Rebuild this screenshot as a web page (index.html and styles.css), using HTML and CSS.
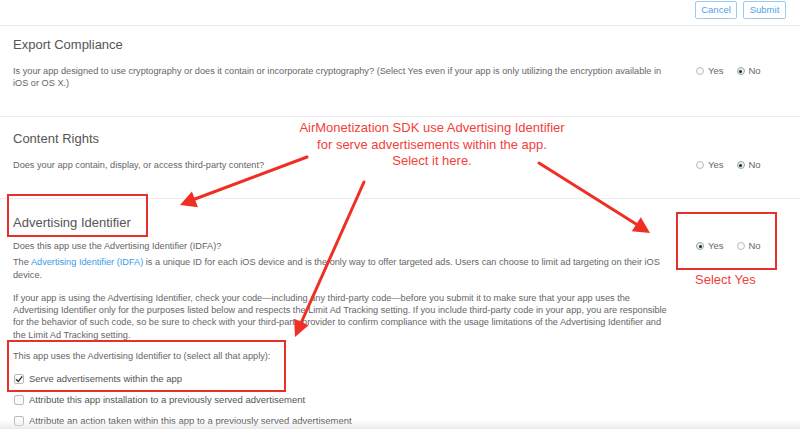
FILE: index.html
```html
<!DOCTYPE html>
<html>
<head>
<meta charset="utf-8">
<link rel="stylesheet" href="styles.css">
</head>
<body>
<div class="page">
  <header class="topbar">
    <button class="btn cancel">Cancel</button>
    <button class="btn submit">Submit</button>
  </header>

  <section class="section first">
    <h2 class="title">Export Compliance</h2>
    <div class="row">
      <p class="text">Is your app designed to use cryptography or does it contain or incorporate cryptography? (Select Yes even if your app is only utilizing the encryption available in<br>iOS or OS X.)</p>
      <div class="radios">
        <span class="radio"></span><span class="rlabel">Yes</span>
        <span class="radio on"></span><span class="rlabel">No</span>
      </div>
    </div>
  </section>

  <section class="section second">
    <h2 class="title">Content Rights</h2>
    <div class="row">
      <p class="text">Does your app contain, display, or access third-party content?</p>
      <div class="radios">
        <span class="radio"></span><span class="rlabel">Yes</span>
        <span class="radio on"></span><span class="rlabel">No</span>
      </div>
    </div>
  </section>

  <section class="section third">
    <h2 class="title">Advertising Identifier</h2>
    <div class="row">
      <p class="text">Does this app use the Advertising Identifier (IDFA)?</p>
      <div class="radios">
        <span class="radio on"></span><span class="rlabel">Yes</span>
        <span class="radio"></span><span class="rlabel">No</span>
      </div>
    </div>
    <p class="text info">The <a class="link">Advertising Identifier (IDFA)</a> is a unique ID for each iOS device and is the only way to offer targeted ads. Users can choose to limit ad targeting on their iOS<br>device.</p>
    <p class="text para">If your app is using the Advertising Identifier, check your code—including any third-party code—before you submit it to make sure that your app uses the<br>Advertising Identifier only for the purposes listed below and respects the Limit Ad Tracking setting. If you include third-party code in your app, you are responsible<br>for the behavior of such code, so be sure to check with your third-party provider to confirm compliance with the usage limitations of the Advertising Identifier and<br>the Limit Ad Tracking setting.</p>
    <p class="text uses">This app uses the Advertising Identifier to (select all that apply):</p>
    <ul class="checks">
      <li class="check"><span class="box on"><svg viewBox="0 0 10 10" width="10" height="10"><path d="M2 5.2 L4.2 7.4 L8.3 2.4" fill="none" stroke="#333" stroke-width="1.4"/></svg></span>Serve advertisements within the app</li>
      <li class="check"><span class="box"></span>Attribute this app installation to a previously served advertisement</li>
      <li class="check"><span class="box"></span>Attribute an action taken within this app to a previously served advertisement</li>
    </ul>
  </section>

  <div class="note">AirMonetization SDK use Advertising Identifier<br>for serve advertisements within the app.<br>Select it here.</div>
  <div class="note small">Select Yes</div>

  <svg class="marks" width="800" height="429" viewBox="0 0 800 429">
    <g fill="none" stroke="#e8302a" stroke-width="2">
      <rect x="8" y="195" width="139" height="41"/>
      <rect x="8" y="341" width="277" height="50"/>
      <rect x="677" y="213" width="99" height="56"/>
    </g>
    <g stroke="#ef2f24" stroke-width="3" stroke-linecap="round">
      <line x1="307" y1="157" x2="195" y2="199"/>
      <line x1="364" y1="182" x2="301.5" y2="322"/>
      <line x1="539" y1="163" x2="636" y2="224"/>
    </g>
    <g fill="#ef2f24">
      <polygon points="180,205 191.9,191.5 198,207.3"/>
      <polygon points="295,337 294.2,318.8 308.6,325.2"/>
      <polygon points="650,233 631.8,231.3 640.8,217.3"/>
    </g>
  </svg>
  <div class="fade"></div>
</div>
</body>
</html>
```

FILE: styles.css
```css
html, body {
  margin: 0;
  padding: 0;
  background: #fff;
}
body {
  font-family: "Helvetica Neue", "Liberation Sans", Arial, sans-serif;
  color: #666;
  overflow: hidden;
}
.page {
  position: relative;
  width: 800px;
  height: 429px;
  overflow: hidden;
}
.topbar {
  display: flex;
  justify-content: flex-end;
  gap: 6px;
  padding: 1px 14px 0 0;
  height: 26px;
  box-sizing: border-box;
  border-bottom: 1px solid #e9e9e9;
}
.btn {
  font-family: inherit;
  font-size: 9.5px;
  color: #4da3ec;
  background: #fff;
  border: 1px solid #9ccbf2;
  border-radius: 2px;
  height: 18px;
  padding: 0;
  line-height: 16px;
  text-align: center;
}
.cancel { width: 42px; }
.submit { width: 43px; }
.section {
  padding: 0 13px;
  border-bottom: 1px solid #ececec;
}
.first { padding-top: 10px; height: 80px; }
.second { padding-top: 13px; height: 68px; }
.third { padding-top: 15px; border-bottom: none; }
.title {
  margin: 0;
  font-size: 13px;
  font-weight: normal;
  line-height: 18px;
  color: #555;
}
.row {
  display: flex;
  justify-content: space-between;
  align-items: flex-start;
}
.text {
  margin: 0;
  font-size: 9.2px;
  line-height: 12.3px;
  color: #666;
  white-space: nowrap;
}
.first .row, .second .row { margin-top: 11px; }
.third .row { margin-top: 8px; }
.radios {
  display: flex;
  align-items: center;
  width: 91px;
  font-size: 9.5px;
  line-height: 12px;
  color: #666;
}
.radio {
  width: 8px;
  height: 8px;
  border: 1px solid #bbb;
  border-radius: 50%;
  box-sizing: border-box;
  background: #fafafa;
  position: relative;
  margin-right: 4px;
}
.radio.on::after {
  content: "";
  position: absolute;
  left: 1.5px;
  top: 1.5px;
  width: 3px;
  height: 3px;
  border-radius: 50%;
  background: #222;
}
.radio.on { border-color: #9aa; background: #e9eef3; }
.rlabel { margin-right: 13px; }
.info { margin-top: 4px; }
.link { color: #3a9ae8; }
.para { margin-top: 11px; }
.uses { margin-top: 9px; }
.checks {
  list-style: none;
  margin: 6px 0 0 0;
  padding: 0;
}
.check {
  display: flex;
  align-items: center;
  font-size: 9.5px;
  line-height: 12px;
  color: #555;
  height: 21px;
}
.box {
  width: 10px;
  height: 10px;
  border: 1px solid #bbb;
  border-radius: 2px;
  box-sizing: border-box;
  margin: 0 5px 0 1px;
  background: #fbfbfb;
  position: relative;
}
.box svg {
  position: absolute;
  left: -1px;
  top: -1px;
}
.note {
  position: absolute;
  left: 232px;
  top: 120px;
  width: 400px;
  text-align: center;
  font-size: 13px;
  line-height: 16.5px;
  color: #f2413a;
  white-space: nowrap;
}
.note.small {
  left: 695px;
  top: 272px;
  width: auto;
  text-align: left;
}
.marks {
  position: absolute;
  left: 0;
  top: 0;
  pointer-events: none;
}
.fade {
  position: absolute;
  left: 0;
  right: 0;
  bottom: 0;
  height: 9px;
  background: linear-gradient(to bottom, rgba(235,235,235,0), rgba(226,226,226,0.7));
  pointer-events: none;
}
```
